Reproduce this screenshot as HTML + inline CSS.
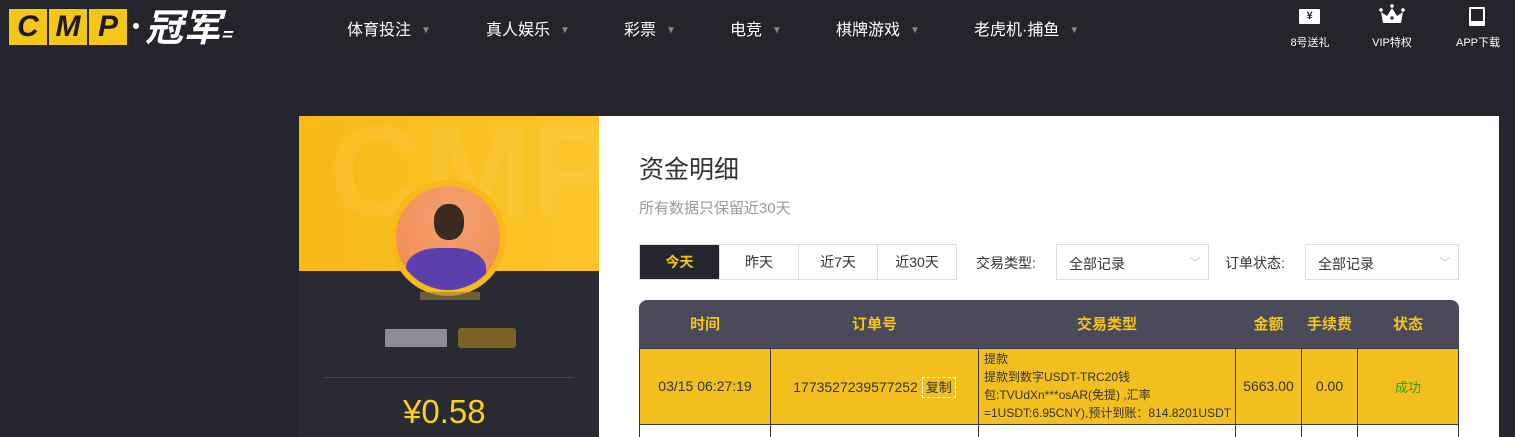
<!DOCTYPE html>
<html><head><meta charset="utf-8"><style>
*{margin:0;padding:0;box-sizing:border-box}
html,body{width:1515px;height:437px;overflow:hidden}
body{background:#25252e;font-family:"Liberation Sans","Noto Sans CJK SC",sans-serif;position:relative}
.a{position:absolute}
.nav{color:#fff;font-size:16px;top:16px}
.nav i{font-style:normal;color:#888;font-size:10px;margin-left:10px;vertical-align:2px}
.ic{color:#fff;font-size:11px;text-align:center;width:70px;top:34px}
td,th{border:1px solid #3a3a40;text-align:center;font-size:13px;color:#333}
th{border:none;color:#f5c518;font-size:15px;font-weight:bold;height:48px}
.L{width:38px;height:36px;background:#f5c518;color:#1a1a1a;font:italic bold 30px 'Liberation Sans';text-align:center;line-height:36px}
</style></head><body>
<div class="a" style="left:0;top:0;width:1515px;height:56px;background:#24242c"></div>
<div class="a" style="left:9px;top:9px;display:flex;gap:2px">
<div class="L">C</div><div class="L">M</div><div class="L">P</div>
</div>
<div class="a" style="left:133px;top:23px;width:6px;height:6px;border-radius:50%;background:#fff"></div>
<div class="a" style="left:145px;top:2px;color:#fff;font:italic bold 38px 'Noto Sans CJK SC',sans-serif;line-height:46px">冠军<span style="font-size:18px">=</span></div>
<div class="a nav" style="left:347px">体育投注<i>▼</i></div>
<div class="a nav" style="left:486px">真人娱乐<i>▼</i></div>
<div class="a nav" style="left:624px">彩票<i>▼</i></div>
<div class="a nav" style="left:730px">电竞<i>▼</i></div>
<div class="a nav" style="left:836px">棋牌游戏<i>▼</i></div>
<div class="a nav" style="left:974px">老虎机·捕鱼<i>▼</i></div>
<div class="a" style="left:1299px;top:9px;width:21px;height:15px;background:#fff;color:#24242c;font-size:11px;font-weight:bold;line-height:15px;text-align:center;border-radius:1px">¥</div>
<svg class="a" style="left:1379px;top:4px" width="26" height="20" viewBox="0 0 26 20"><circle cx="13" cy="2" r="1.8" fill="#fff"/><circle cx="2" cy="6" r="1.8" fill="#fff"/><circle cx="24" cy="6" r="1.8" fill="#fff"/><path d="M2 8l6 4 5-8 5 8 6-4-2 11H4z" fill="#fff"/><circle cx="13" cy="14" r="1.6" fill="#24242c"/></svg>
<div class="a" style="left:1469px;top:7px;width:16px;height:19px;border:2px solid #fff;border-bottom-width:5px;border-radius:1px"></div>
<div class="a ic" style="left:1275px">8号送礼</div>
<div class="a ic" style="left:1357px">VIP特权</div>
<div class="a ic" style="left:1443px">APP下载</div>

<div class="a" style="left:299px;top:116px;width:300px;height:321px;background:#2a2a33"></div>
<div class="a" style="left:299px;top:116px;width:300px;height:155px;background:linear-gradient(90deg,#f7b918,#fcc52a);overflow:hidden"><div style="position:absolute;left:30px;top:-20px;font:bold 130px 'Liberation Sans';color:rgba(255,255,255,.06)">CMP</div></div>
<div class="a" style="left:390px;top:180px;width:116px;height:116px;border-radius:50%;background:#f7b918;padding:6px"><div style="width:104px;height:104px;border-radius:50%;background:radial-gradient(circle at 55% 30%,#f4a070,#f08850);overflow:hidden;position:relative"><div style="position:absolute;left:38px;top:18px;width:30px;height:36px;border-radius:45%;background:#3a2a20"></div><div style="position:absolute;left:10px;top:62px;width:80px;height:50px;border-radius:40% 40% 0 0;background:#5a3fae"></div></div></div>
<div class="a" style="left:420px;top:292px;width:60px;height:8px;background:#9b8040;opacity:.6"></div>
<div class="a" style="left:385px;top:329px;width:62px;height:18px;background:#b8b8c0;opacity:.7"></div>
<div class="a" style="left:458px;top:328px;width:58px;height:20px;background:#7a6224;border-radius:3px"></div>
<div class="a" style="left:324px;top:377px;width:250px;height:1px;background:#444450"></div>
<div class="a" style="left:403px;top:393px;color:#f8d31a;font-size:33px">¥0.58</div>

<div class="a" style="left:599px;top:116px;width:900px;height:321px;background:#fff"></div>
<div class="a" style="left:639px;top:150px;font-size:25px;color:#333">资金明细</div>
<div class="a" style="left:639px;top:197px;font-size:15px;color:#999">所有数据只保留近30天</div>
<div class="a" style="left:639px;top:244px;display:flex;border:1px solid #ddd;height:36px">
<div style="width:79px;background:#25252d;color:#f5c518;font-weight:bold;font-size:14px;text-align:center;line-height:34px">今天</div>
<div style="width:79px;border-left:1px solid #ddd;font-size:14px;text-align:center;line-height:34px;color:#333">昨天</div>
<div style="width:79px;border-left:1px solid #ddd;font-size:14px;text-align:center;line-height:34px;color:#333">近7天</div>
<div style="width:79px;border-left:1px solid #ddd;font-size:14px;text-align:center;line-height:34px;color:#333">近30天</div>
</div>
<div class="a" style="left:976px;top:253px;font-size:14px;color:#333">交易类型:</div>
<div class="a" style="left:1056px;top:244px;width:153px;height:36px;border:1px solid #ddd;font-size:14px;color:#333;padding:9px 12px">全部记录<span style="position:absolute;right:8px;color:#bbb;font-size:10px">﹀</span></div>
<div class="a" style="left:1225px;top:253px;font-size:14px;color:#333">订单状态:</div>
<div class="a" style="left:1305px;top:244px;width:154px;height:36px;border:1px solid #ddd;font-size:14px;color:#333;padding:9px 12px">全部记录<span style="position:absolute;right:8px;color:#bbb;font-size:10px">﹀</span></div>

<table class="a" style="left:639px;top:300px;width:820px;border-collapse:collapse;background:#4a4a5a;border-radius:8px 8px 0 0;overflow:hidden">
<tr><th style="width:131px">时间</th><th style="width:208px">订单号</th><th style="width:257px">交易类型</th><th style="width:66px">金额</th><th style="width:56px">手续费</th><th>状态</th></tr>
<tr style="background:#f2bf1e;height:76px"><td style="font-size:14px">03/15 06:27:19</td><td style="font-size:14px">1773527239577252 <span style="border:1px dashed #fff;padding:2px 3px;font-size:13px">复制</span></td><td style="text-align:left;padding-left:5px;font-size:12px;line-height:18px">提款<br>提款到数字USDT-TRC20钱<br>包:TVUdXn***osAR(免提) ,汇率<br>=1USDT:6.95CNY),预计到账：814.8201USDT</td><td style="font-size:14px">5663.00</td><td style="font-size:14px">0.00</td><td style="color:#3a9a1a">成功</td></tr>
<tr style="background:#fff;height:20px"><td></td><td></td><td></td><td></td><td></td><td></td></tr>
</table>
</body></html>
